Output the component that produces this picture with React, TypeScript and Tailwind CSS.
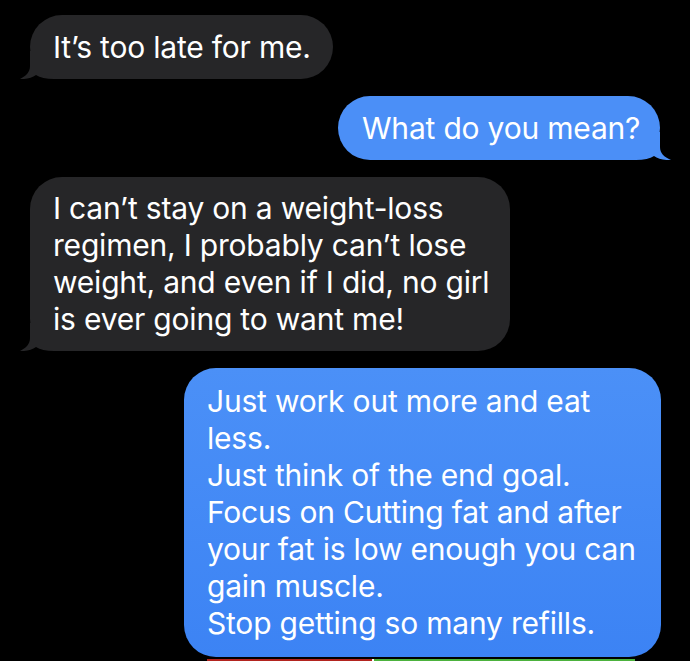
import React from "react";

const font = { fontFamily: "Inter, 'Noto Sans', sans-serif" };

function LeftTail() {
  return (
    <svg
      className="absolute left-[-10px] bottom-0"
      width="44"
      height="28"
      viewBox="0 0 44 28"
    >
      <path
        d="M10 0 L10 15 C10 21 6 25 0 28 C6 28.4 12 27 16 24 C20 26.5 26 28 34 28 L44 28 L44 0 Z"
        fill="#262628"
      />
    </svg>
  );
}

function RightTail({ color }: { color: string }) {
  return (
    <svg
      className="absolute right-[-11px] bottom-0"
      width="45"
      height="28"
      viewBox="0 0 45 28"
    >
      <path
        d="M34 0 L34 15 C34 21 38 25 45 28 C38 28.4 32 27 28 24 C24 26.5 18 28 10 28 L0 28 L0 0 Z"
        fill={color}
      />
    </svg>
  );
}

export default function App() {
  return (
    <div
      className="w-[690px] h-[661px] bg-black overflow-hidden flex flex-col pt-[15px] text-white text-[30px] leading-[37px] tracking-[-0.2px]"
      style={font}
    >
      <div className="relative ml-[30px] w-[303px] rounded-[32px] bg-[#262628] pl-[23px] pt-[14px] pb-[13px]">
        <LeftTail />
        <span className="relative">It’s too late for me.</span>
      </div>

      <div className="relative self-end mr-[30px] mt-[17px] w-[322px] rounded-[32px] bg-[#4b8ff7] pl-[24px] pt-[14px] pb-[13px]">
        <RightTail color="#4b8ff7" />
        <span className="relative">What do you mean?</span>
      </div>

      <div className="relative ml-[30px] mt-[17px] w-[480px] rounded-[32px] bg-[#262628] pl-[23px] pt-[13px] pb-[13px]">
        <LeftTail />
        <p className="relative">
          I can’t stay on a weight-loss
          <br />
          regimen, I probably can’t lose
          <br />
          weight, and even if I did, no girl
          <br />
          is ever going to want me!
        </p>
      </div>

      <div className="relative self-end mr-[29px] mt-[17px] w-[477px] rounded-[32px] bg-gradient-to-b from-[#4b90f7] to-[#3c83f4] pl-[23px] pt-[15px] pb-[15px]">
        <p>
          Just work out more and eat
          <br />
          less.
          <br />
          Just think of the end goal.
          <br />
          Focus on Cutting fat and after
          <br />
          your fat is low enough you can
          <br />
          gain muscle.
          <br />
          Stop getting so many refills.
        </p>
      </div>

      <div className="flex mt-[2px] ml-[207px] h-[3px] w-[428px] shrink-0">
        <div className="w-[165px] bg-[#b3241f]" />
        <div className="w-[2px] bg-white" />
        <div className="flex-1 bg-[#4cb23d]" />
      </div>
    </div>
  );
}
